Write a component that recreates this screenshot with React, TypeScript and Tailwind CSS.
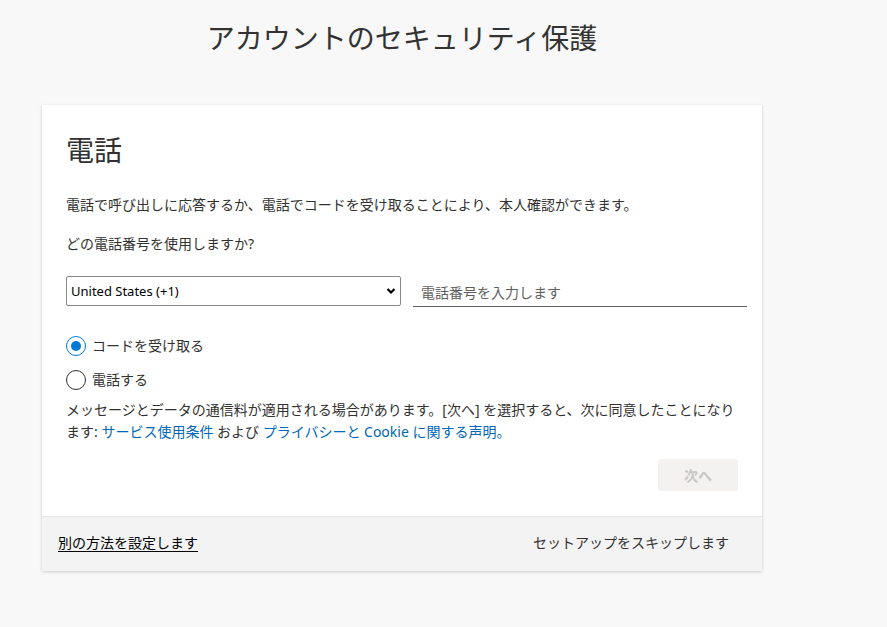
import { useState } from "react";

const font = {
  fontFamily: '"Noto Sans", "Noto Sans CJK JP", sans-serif',
};

function Radio({ checked, label, onClick }: { checked: boolean; label: string; onClick: () => void }) {
  return (
    <button type="button" onClick={onClick} className="flex items-center gap-[6px] h-[20px] text-left">
      <span
        className={
          checked
            ? "w-[20px] h-[20px] rounded-full border-[1.5px] border-[#0078d4] flex items-center justify-center"
            : "w-[20px] h-[20px] rounded-full border border-[#323130]"
        }
      >
        {checked && <span className="w-[10px] h-[10px] rounded-full bg-[#0078d4]" />}
      </span>
      <span className="text-[14px] leading-[20px] text-[#323130]">{label}</span>
    </button>
  );
}

export default function App() {
  const [mode, setMode] = useState<"code" | "call">("code");

  return (
    <div className="min-h-[627px] bg-[#f8f8f8] text-[#323130]" style={font}>
      <div className="w-[720px] ml-[42px]">
        <h1 className="pt-[20px] text-center text-[28px] leading-[36px] font-normal text-[#333333]">
          アカウントのセキュリティ保護
        </h1>

        <div className="mt-[49px] bg-white shadow-[0_1px_3px_rgba(0,0,0,0.18)]">
          <div className="px-[24px] pt-[24px] pb-[25px]">
            <h2 className="text-[28px] leading-[42px] font-normal">電話</h2>
            <p className="mt-[24px] text-[14px] leading-[20px]">
              電話で呼び出しに応答するか、電話でコードを受け取ることにより、本人確認ができます。
            </p>
            <p className="mt-[19px] text-[14px] leading-[20px]">どの電話番号を使用しますか?</p>

            <div className="mt-[22px] flex gap-[12px] w-[681px]">
              <div className="relative w-[335px] h-[30px]">
                <select
                  className="appearance-none w-full h-full border border-[#8a8886] rounded-[2px] pl-[4px] pr-[24px] pt-[2px] text-[13px] text-black bg-white outline-none"
                  style={font}
                  defaultValue="us"
                >
                  <option value="us">United States (+1)</option>
                  <option value="jp">Japan (+81)</option>
                </select>
                <svg
                  className="absolute right-[5px] top-[11px] pointer-events-none"
                  width="10"
                  height="8"
                  viewBox="0 0 10 8"
                >
                  <path d="M1.5 2 L5 5.5 L8.5 2" fill="none" stroke="#000" strokeWidth="2.2" />
                </svg>
              </div>
              <input
                className="w-[334px] h-[31px] border-b border-[#605e5c] px-[8px] pt-[2px] text-[14px] outline-none placeholder:text-[#605e5c] bg-transparent"
                style={font}
                placeholder="電話番号を入力します"
              />
            </div>

            <div className="mt-[29px] flex flex-col gap-[14px]">
              <Radio checked={mode === "code"} label="コードを受け取る" onClick={() => setMode("code")} />
              <Radio checked={mode === "call"} label="電話する" onClick={() => setMode("call")} />
            </div>

            <p className="mt-[9px] w-[681px] text-[14px] leading-[22px]">
              メッセージとデータの通信料が適用される場合があります。[次へ] を選択すると、次に同意したことになり
              <br />
              ます:{" "}
              <a href="#" className="text-[#0067b8]">
                サービス使用条件
              </a>{" "}
              および{" "}
              <a href="#" className="text-[#0067b8]">
                プライバシーと Cookie に関する声明
              </a>
              <span className="text-[#0067b8]">。</span>
            </p>

            <div className="mt-[16px] flex justify-end">
              <button
                type="button"
                disabled
                className="w-[80px] h-[32px] rounded-[2px] bg-[#f3f2f1] text-[#c8c6c4] text-[14px] font-semibold"
              >
                次へ
              </button>
            </div>
          </div>

          <div className="h-[55px] bg-[#f3f3f3] border-t border-[#e6e6e6] flex items-center justify-between pl-[16px] pr-[33px]">
            <a href="#" className="-mt-[2px] text-[14px] leading-[20px] text-black underline underline-offset-[3px]">
              別の方法を設定します
            </a>
            <button type="button" className="-mt-[2px] text-[14px] leading-[20px] text-[#323130]">
              セットアップをスキップします
            </button>
          </div>
        </div>
      </div>
    </div>
  );
}
